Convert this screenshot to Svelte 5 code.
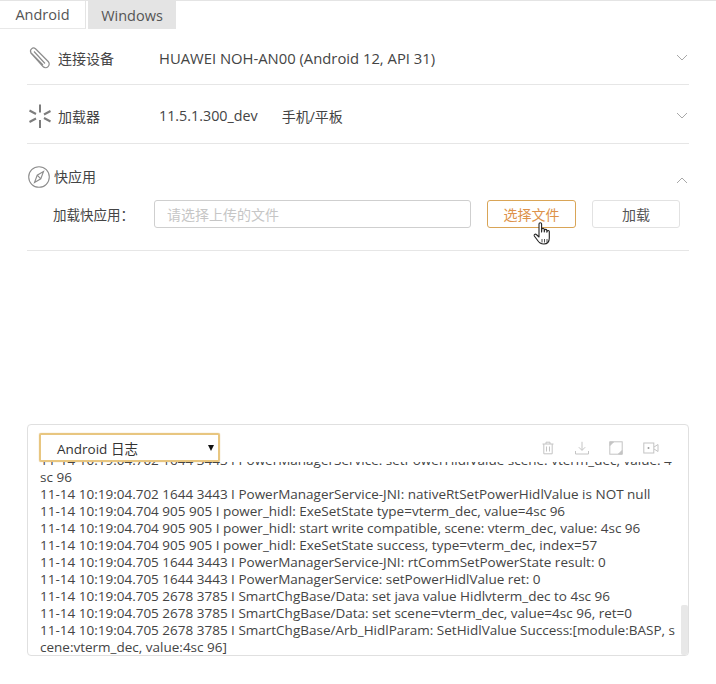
<script>
  const lines = [
    '11-14 10:19:04.702 1644 3443 I PowerManagerService: setPowerHidlValue scene: vterm_dec, value: 4',
    'sc 96',
    '11-14 10:19:04.702 1644 3443 I PowerManagerService-JNI: nativeRtSetPowerHidlValue is NOT null',
    '11-14 10:19:04.704 905 905 I power_hidl: ExeSetState type=vterm_dec, value=4sc 96',
    '11-14 10:19:04.704 905 905 I power_hidl: start write compatible, scene: vterm_dec, value: 4sc 96',
    '11-14 10:19:04.704 905 905 I power_hidl: ExeSetState success, type=vterm_dec, index=57',
    '11-14 10:19:04.705 1644 3443 I PowerManagerService-JNI: rtCommSetPowerState result: 0',
    '11-14 10:19:04.705 1644 3443 I PowerManagerService: setPowerHidlValue ret: 0',
    '11-14 10:19:04.705 2678 3785 I SmartChgBase/Data: set java value Hidlvterm_dec to 4sc 96',
    '11-14 10:19:04.705 2678 3785 I SmartChgBase/Data: set scene=vterm_dec, value=4sc 96, ret=0',
    '11-14 10:19:04.705 2678 3785 I SmartChgBase/Arb_HidlParam: SetHidlValue Success:[module:BASP, s',
    'cene:vterm_dec, value:4sc 96]'
  ];
</script>

<div class="page">
  <nav class="tabs">
    <button class="tab">Android</button>
    <button class="tab active">Windows</button>
  </nav>

  <section class="rows">
    <div class="row r1">
      <svg class="icon" viewBox="0 0 24 24" fill="none" stroke="#8c8c8c" stroke-width="1.2">
        <path d="M3.5 6.5 L16 20.5 a3.6 3.6 0 0 0 5.2-5 L8.5 2.8 a3 3 0 0 0 -4.4 4 L16 19 M7 5.5 L18 17.5" />
      </svg>
      <span class="label">连接设备</span>
      <span class="value">HUAWEI NOH-AN00 (Android 12, API 31)</span>
      <svg class="chev" viewBox="0 0 12 7" fill="none" stroke="#a8a8a8" stroke-width="1"><path d="M1 1l5 5 5-5" /></svg>
    </div>
    <div class="row r2">
      <svg class="icon" viewBox="0 0 24 24" fill="none" stroke="#7d7d7d" stroke-width="2">
        <path d="M13 .5v8M13 16v8M2.500 6.500l6.500 3.500M17 14l6.500 3.500M2.500 18l6.500-3.500M17 10.500l6.500-3.500" />
      </svg>
      <span class="label">加载器</span>
      <span class="value">11.5.1.300_dev</span>
      <span class="value kind">手机/平板</span>
      <svg class="chev" viewBox="0 0 12 7" fill="none" stroke="#a8a8a8" stroke-width="1"><path d="M1 1l5 5 5-5" /></svg>
    </div>
    <div class="row r3">
      <div class="quick-head">
        <svg class="icon" viewBox="0 0 24 24" fill="none" stroke="#8c8c8c" stroke-width="1.1">
          <circle cx="12" cy="12" r="10.300" />
          <path d="M16.500 6.500 L13.800 13.800 L7.500 17.500 L10.200 10.200 Z M10.200 10.200 L13.800 13.800" />
        </svg>
        <span class="label quick">快应用</span>
        <svg class="chev up" viewBox="0 0 12 7" fill="none" stroke="#a8a8a8" stroke-width="1"><path d="M1 6l5-5 5 5" /></svg>
      </div>
      <div class="form">
        <span class="form-label">加载快应用：</span>
        <input class="file" placeholder="请选择上传的文件" readonly />
        <button class="btn primary">选择文件</button>
        <button class="btn">加载</button>
        <svg class="cursor" viewBox="0 0 18 26" fill="#fff" stroke="#222" stroke-width="1.100" stroke-linejoin="round">
          <path d="M6 3a1.300 1.300 0 0 1 2.600 0v8l.2-2.500a1.200 1.200 0 0 1 2.400 0l.1 2.500.2-1.800a1.200 1.200 0 0 1 2.300 0l.1 2 .3-1a1.100 1.100 0 0 1 2.100.3v6.500c0 3.500-2 6-5.500 6s-5-1.500-6.500-4L1.300 15c-.7-1.200 1-2.500 2-1.500L6 16Z" />
          <path d="M9 18v3.500M11.500 18v3.500M14 18v3.500" stroke-width=".8" />
        </svg>
      </div>
    </div>
  </section>

  <section class="panel">
    <header class="panel-head">
      <div class="select"><span>Android 日志</span><i></i></div>
      <div class="tools">
        <svg viewBox="0 0 14 14" fill="none" stroke="#c4c4c4"><path d="M1.500 3h11M5 3V1.200h4V3M2.800 3v9.800h8.400V3M5.500 5.500v5M8.500 5.500v5" /></svg>
        <svg viewBox="0 0 14 14" fill="none" stroke="#c4c4c4"><path d="M7 .8v8.400M3.800 6.200 7 9.400l3.200-3.200M.5 10v3h13v-3" /></svg>
        <svg viewBox="0 0 14 14" fill="none" stroke="#c4c4c4"><rect x=".8" y=".8" width="12.400" height="12.400" /><path d="M1 1l3.500 0-3.500 3.500ZM13 13l-3.500 0 3.500-3.500Z" fill="#c4c4c4" /></svg>
        <svg viewBox="0 0 16 14" fill="none" stroke="#c4c4c4"><rect x=".8" y="2" width="10" height="10" /><circle cx="5.500" cy="7" r="1" fill="#999" stroke="none" /><path d="M11 6l4-2.500v7L11 8" /></svg>
      </div>
    </header>
    <div class="log">
      <div class="log-inner">
        {#each lines as line}<p>{line}</p>{/each}
      </div>
      <div class="thumb"></div>
    </div>
  </section>
</div>

<style>
  :global(body) {
    margin: 0;
    background: #fff;
  }
  .page {
    width: 716px;
    height: 684px;
    box-sizing: border-box;
    border-top: 1px solid #e4e4e4;
    font-family: "Open Sans", "Noto Sans CJK SC", sans-serif;
    color: #333;
    overflow: hidden;
  }
  .tabs {
    display: flex;
    gap: 2px;
    height: 28px;
  }
  .tab {
    width: 86px;
    height: 28px;
    padding: 0;
    border: 0;
    border-right: 1px solid #e4e4e4;
    border-bottom: 1px solid #e8e8e8;
    background: #fff;
    color: #555;
    font: inherit;
    font-size: 14.500px;
  }
  .tab.active {
    width: 88px;
    background: #e4e4e4;
    border: 0;
  }
  .rows {
    margin: 0 27px;
    width: 662px;
  }
  .row {
    display: flex;
    align-items: center;
    border-bottom: 1px solid #e6e6e6;
    font-size: 14px;
  }
  .r1 {
    height: 56px;
    box-sizing: border-box;
    padding-top: 2px;
  }
  .r2 {
    height: 59px;
    box-sizing: border-box;
    padding-top: 3px;
  }
  .icon {
    width: 24px;
    height: 24px;
    flex: none;
    overflow: visible;
  }
  .label {
    width: 101px;
    margin-left: 7px;
    font-size: 14px;
    color: #444;
  }
  .value {
    color: #444;
    font-size: 14.800px;
  }
  .r2 .value:not(.kind) {
    font-size: 14.300px;
  }
  .kind {
    margin-left: 24px;
    font-size: 14px;
  }
  .chev {
    width: 12px;
    height: 7px;
    margin-left: auto;
    margin-right: 1px;
  }
  .r3 {
    display: block;
    height: 107px;
    padding-top: 21px;
    box-sizing: border-box;
  }
  .quick-head {
    display: flex;
    align-items: center;
    height: 24px;
  }
  .quick {
    margin-left: 3px;
    margin-top: -2px;
  }
  .up {
    margin-top: 6px;
  }
  .form {
    position: relative;
    display: flex;
    align-items: center;
    margin-top: 11px;
    height: 28px;
    padding-left: 26px;
  }
  .form-label {
    width: 101px;
    font-size: 13.500px;
    color: #444;
  }
  .file {
    width: 317px;
    height: 28px;
    box-sizing: border-box;
    padding: 0 12px;
    border: 1px solid #cfcfcf;
    border-radius: 3px;
    font: inherit;
    font-size: 14px;
    outline: 0;
  }
  .file::placeholder {
    color: #c6c6c6;
  }
  .btn {
    width: 88px;
    height: 28px;
    margin-left: 16px;
    padding: 0;
    border: 1px solid #e2e2e2;
    border-radius: 3px;
    background: #fff;
    color: #555;
    font: inherit;
    font-size: 14px;
  }
  .btn.primary {
    width: 89px;
    border-color: #d9a557;
    color: #dd924a;
  }
  .cursor {
    position: absolute;
    left: 506px;
    top: 21px;
    width: 18px;
    height: 26px;
  }
  .panel {
    position: relative;
    margin: 173px 0 0 27px;
    width: 662px;
    height: 232px;
    box-sizing: border-box;
    border: 1px solid #e0e0e0;
    border-radius: 4px;
    overflow: hidden;
  }
  .panel-head {
    display: flex;
    align-items: center;
    justify-content: space-between;
    height: 37px;
    padding: 8px 29px 0 11px;
    box-sizing: border-box;
  }
  .select {
    display: flex;
    align-items: center;
    justify-content: space-between;
    width: 181px;
    height: 29px;
    box-sizing: border-box;
    padding: 0 4px 0 16px;
    border: 2px solid #e8c680;
    border-radius: 2px;
    font-size: 13.500px;
    color: #333;
    box-shadow: 0 0 1px #cfa95f;
  }
  .select i {
    width: 0;
    height: 0;
    border: 3.500px solid transparent;
    border-top: 6px solid #111;
    border-bottom: 0;
  }
  .tools {
    display: flex;
    align-items: center;
    gap: 20px;
  }
  .tools svg {
    width: 14px;
    height: 14px;
  }
  .tools svg:last-child {
    width: 16px;
  }
  .log {
    position: relative;
    height: 193px;
    overflow: hidden;
  }
  .log-inner {
    margin-top: -10px;
    padding: 0 12px;
    font-size: 13.500px;
    line-height: 17px;
    color: #444;
    white-space: nowrap;
  }
  p {
    margin: 0;
  }
  .thumb {
    position: absolute;
    right: 0;
    bottom: 0;
    width: 7px;
    height: 50px;
    background: #e8e8e8;
    border-radius: 2px;
  }
</style>
